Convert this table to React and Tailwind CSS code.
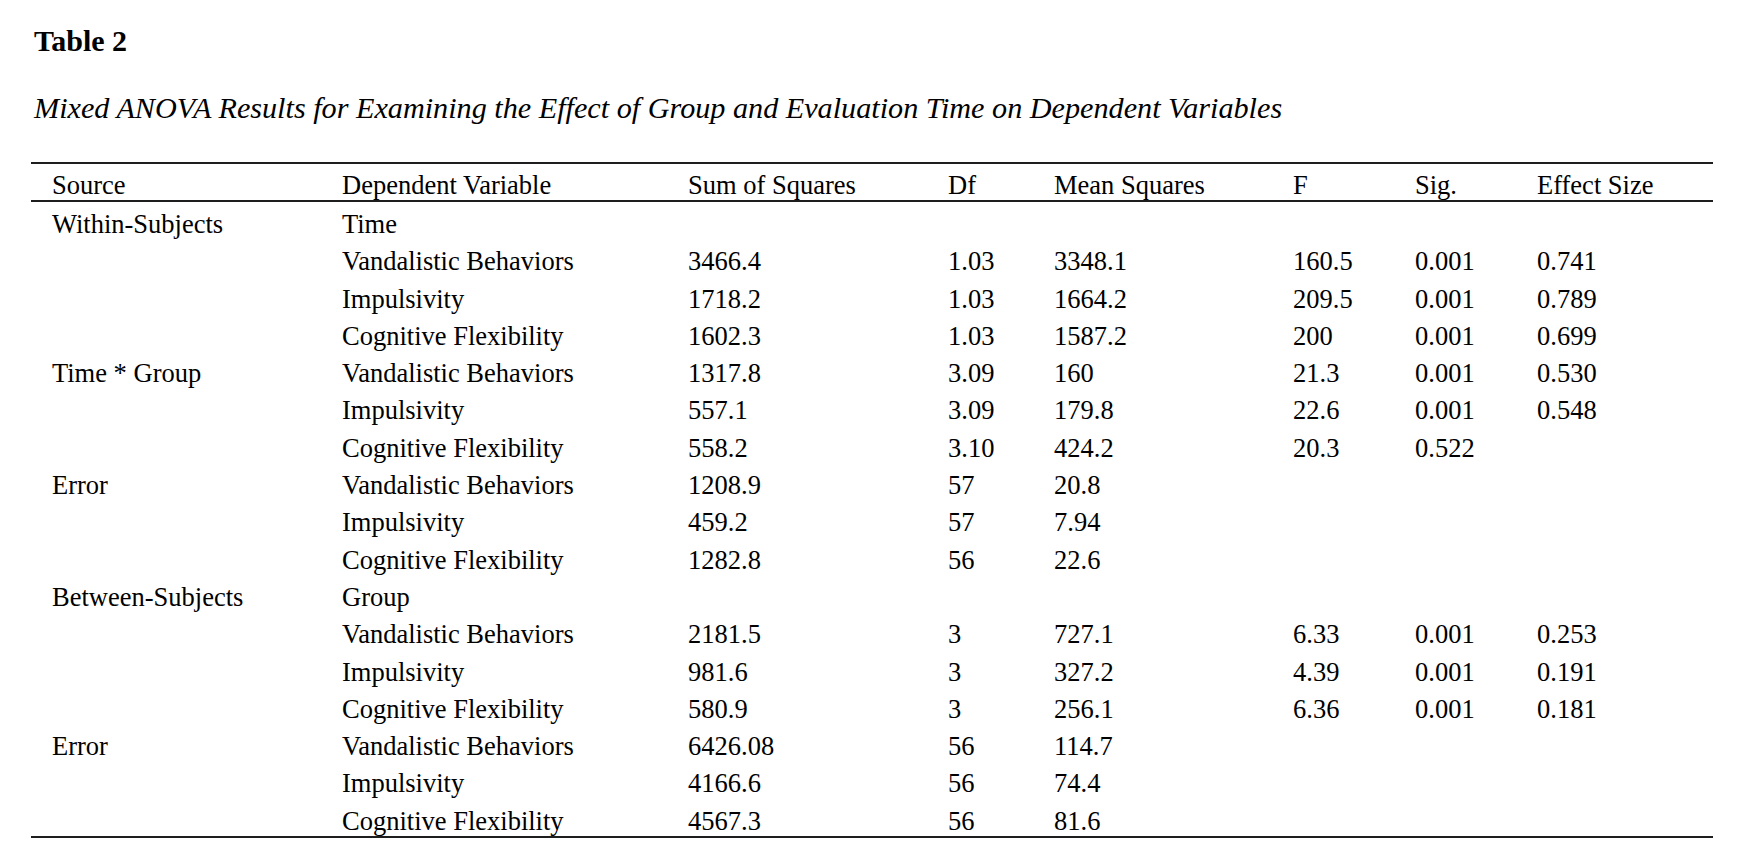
import React from "react";

const header = ["Source", "Dependent Variable", "Sum of Squares", "Df", "Mean Squares", "F", "Sig.", "Effect Size"];

const rows = [
  ["Within-Subjects", "Time", "", "", "", "", "", ""],
  ["", "Vandalistic Behaviors", "3466.4", "1.03", "3348.1", "160.5", "0.001", "0.741"],
  ["", "Impulsivity", "1718.2", "1.03", "1664.2", "209.5", "0.001", "0.789"],
  ["", "Cognitive Flexibility", "1602.3", "1.03", "1587.2", "200", "0.001", "0.699"],
  ["Time * Group", "Vandalistic Behaviors", "1317.8", "3.09", "160", "21.3", "0.001", "0.530"],
  ["", "Impulsivity", "557.1", "3.09", "179.8", "22.6", "0.001", "0.548"],
  ["", "Cognitive Flexibility", "558.2", "3.10", "424.2", "20.3", "0.522", ""],
  ["Error", "Vandalistic Behaviors", "1208.9", "57", "20.8", "", "", ""],
  ["", "Impulsivity", "459.2", "57", "7.94", "", "", ""],
  ["", "Cognitive Flexibility", "1282.8", "56", "22.6", "", "", ""],
  ["Between-Subjects", "Group", "", "", "", "", "", ""],
  ["", "Vandalistic Behaviors", "2181.5", "3", "727.1", "6.33", "0.001", "0.253"],
  ["", "Impulsivity", "981.6", "3", "327.2", "4.39", "0.001", "0.191"],
  ["", "Cognitive Flexibility", "580.9", "3", "256.1", "6.36", "0.001", "0.181"],
  ["Error", "Vandalistic Behaviors", "6426.08", "56", "114.7", "", "", ""],
  ["", "Impulsivity", "4166.6", "56", "74.4", "", "", ""],
  ["", "Cognitive Flexibility", "4567.3", "56", "81.6", "", "", ""],
];

const gridCols = "grid grid-cols-[290px_346px_260px_106px_239px_122px_122px_1fr] pl-[21px]";

export default function App() {
  return (
    <div className="w-[1745px] h-[865px] bg-white text-black font-['Liberation_Serif','Times_New_Roman',serif] overflow-hidden">
      <div className="pl-[34px] pt-[25px]">
        <div className="text-[30px] leading-[32px] font-bold">Table 2</div>
        <div className="mt-[35px] text-[30.2px] leading-[32px] italic whitespace-nowrap">
          Mixed ANOVA Results for Examining the Effect of Group and Evaluation Time on Dependent Variables
        </div>
      </div>
      <div className="ml-[31px] w-[1682px] mt-[38px] border-t-2 border-b-2 border-[#1e1e1e] text-[26.5px]">
        <div className={`${gridCols} pt-[6px] leading-[30px] border-b-2 border-[#1e1e1e]`}>
          {header.map((h, i) => (
            <div key={i} className="whitespace-nowrap">{h}</div>
          ))}
        </div>
        <div className="pt-[4px] mb-[-4px]">
          {rows.map((r, ri) => (
            <div key={ri} className={`${gridCols} leading-[37.3px]`}>
              {r.map((c, ci) => (
                <div key={ci} className="whitespace-nowrap">{c}</div>
              ))}
            </div>
          ))}
        </div>
      </div>
    </div>
  );
}
